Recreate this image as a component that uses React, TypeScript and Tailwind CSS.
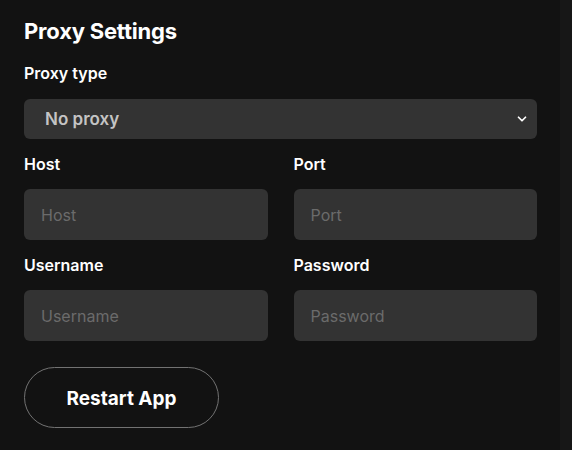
import { ChevronDown } from 'lucide-react'

const Field = ({ label, placeholder }: { label: string; placeholder: string }) => (
  <div className="flex flex-col">
    <label className="h-[25px] pt-[2px] text-[16px] font-semibold leading-[25px] text-white">{label}</label>
    <input
      placeholder={placeholder}
      className="mt-[14px] h-[51px] w-full rounded-md bg-[#333333] px-[17px] text-[16px] text-white outline-none placeholder:text-[#6b6b6b]"
    />
  </div>
)

export default function App() {
  return (
    <div className="flex h-[450px] w-[572px] bg-[#171717] font-['Inter','Noto_Sans',sans-serif]">
      <div className="w-[560px] bg-[#121212] pl-6 pr-[23px] pt-[17px]">
        <h1 className="text-[22px] font-bold leading-[28px] tracking-[-0.2px] text-white">Proxy Settings</h1>
        <div className="mt-[15px] h-[25px] pt-[1px] text-[16px] font-semibold leading-[25px] text-white">Proxy type</div>
        <div className="relative mt-[14px] flex h-[40px] items-center rounded-md bg-[#333333] pl-[21px] pr-3">
          <span className="pt-[2px] text-[17px] font-semibold text-[#c4c4c4]">No proxy</span>
          <ChevronDown className="absolute right-[8px] top-[13px] h-[14px] w-[14px] text-white" strokeWidth={3} />
        </div>
        <div className="mt-[11px] grid grid-cols-2 gap-x-[26px] gap-y-[11px]">
          <Field label="Host" placeholder="Host" />
          <Field label="Port" placeholder="Port" />
          <Field label="Username" placeholder="Username" />
          <Field label="Password" placeholder="Password" />
        </div>
        <button
          type="button"
          className="mt-[26px] h-[61px] w-[195px] rounded-full border border-[#727272] pt-[3px] text-[19px] font-bold text-white"
        >
          Restart App
        </button>
      </div>
    </div>
  )
}
